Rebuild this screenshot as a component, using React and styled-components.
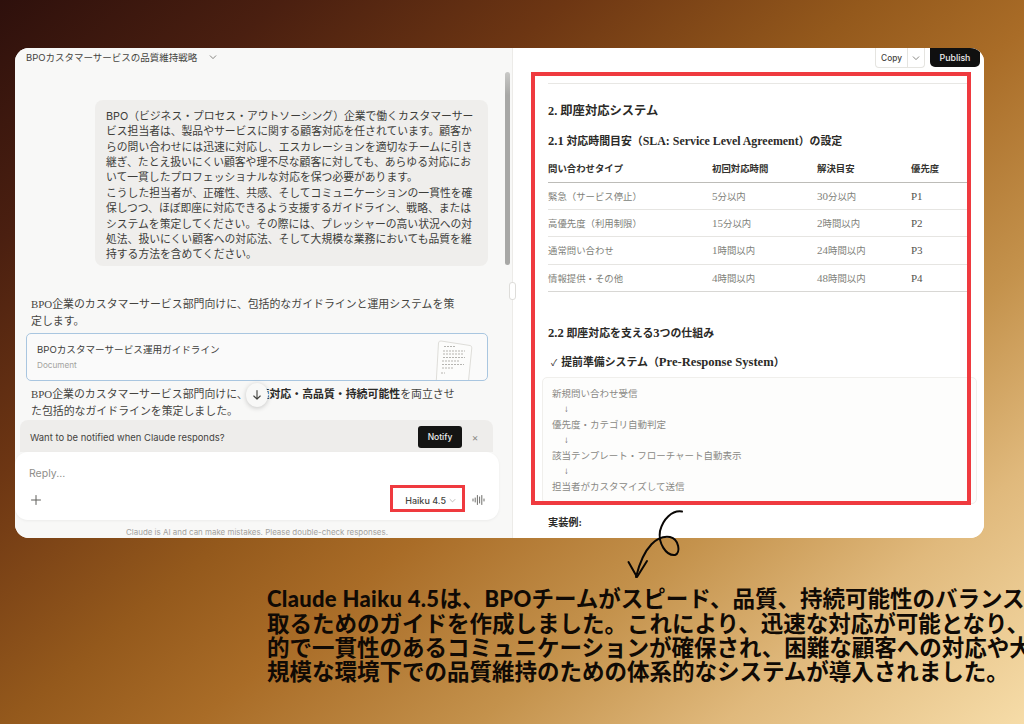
import React from "react";
import styled, { createGlobalStyle } from "styled-components";

const SANS = `"Inter", "Noto Sans CJK JP", sans-serif`;
const SERIF = `"Liberation Serif", "Noto Sans CJK JP", serif`;

const Global = createGlobalStyle`
  html, body { margin: 0; padding: 0; }
  body { width: 1024px; height: 724px; overflow: hidden; font-family: ${SANS}; }
`;

const Stage = styled.div`
  width: 1024px; height: 724px; box-sizing: border-box; overflow: hidden; position: relative;
  padding: 48px 0 0 15px;
  background: linear-gradient(140deg, #2e100c 0%, #4a1f10 15%, #6d3613 30%, #94591c 46%, #a96c27 56%, #c4924c 71%, #e0b97c 84%, #f6dca8 100%);
`;
const Win = styled.div`
  width: 969px; height: 490px; display: flex; position: relative; overflow: hidden;
  border-radius: 14px; background: #fff;
`;
const Left = styled.div`
  width: 497px; flex: none; display: flex; flex-direction: column; background: #f8f8f7; position: relative;
`;
const Title = styled.div`
  display: flex; align-items: center; gap: 12px; height: 18px; padding-left: 11px;
  font-size: 9.5px; color: #45443f;
`;
const Scrollbar = styled.div`
  position: absolute; right: 2px; top: 24px; width: 5px; height: 193px; border-radius: 3px;
  background: linear-gradient(#c9c9c7, #a8a8a6 12%, #a8a8a6);
`;
const Bubble = styled.div`
  margin: 34px 24px 0 80px; height: 168px; box-sizing: border-box; padding: 9px 11px 0;
  background: #efeeec; border-radius: 8px;
  font-size: 10.8px; line-height: 15.4px; color: #3d3d3a;
`;
const Para = styled.p`
  margin: ${p => p.$top}px 51px 0 16px; font-family: ${SERIF};
  font-size: 10.9px; line-height: 17px; color: #45443f;
  strong { font-family: ${SANS}; font-weight: 700; color: #2b2a27; }
`;
const DocCard = styled.div`
  margin: 3px 24px 0 11px; height: 48px; box-sizing: border-box; border: 1px solid #a9c6e0; border-radius: 5px;
  padding: 9px 10px; position: relative; overflow: hidden; background: #fafafa;
`;
const DocName = styled.div` font-size: 9.6px; line-height: 14px; color: #3d3d3a; `;
const DocKind = styled.div` font-size: 8.2px; line-height: 12px; margin-top: 2px; color: #a3a29e; `;
const Thumb = styled.svg` position: absolute; right: 14px; top: 6px; `;
const ScrollDown = styled.div`
  position: absolute; left: 231px; top: 335px; width: 22px; height: 24px; border-radius: 50%;
  background: #f8f8f7; box-shadow: 0 1px 5px rgba(0,0,0,.2);
  display: flex; align-items: center; justify-content: center;
`;
const Composer = styled.div`
  margin-top: auto; display: flex; flex-direction: column; position: relative;
`;
const NotifyBar = styled.div`
  margin: 0 19px 0 5px; height: 32px; background: #eeedeb; border-radius: 8px 8px 0 0;
  display: flex; align-items: center; box-sizing: border-box; padding: 2px 14px 0 10px;
  font-size: 9.45px; color: #45443f;
`;
const NotifyBtn = styled.div`
  margin-left: auto; width: 44px; height: 22px; border-radius: 3px; background: #141413; color: #eee;
  font-size: 8.5px; font-weight: 500; display: flex; align-items: center; justify-content: center;
`;
const Close = styled.span` margin-left: 9px; font-size: 10px; color: #8a8985; width: 8px; text-align: center; `;
const Input = styled.div`
  height: 68px; width: 484px; box-sizing: border-box; background: #fff; border-radius: 13px;
  padding: 15px 13px 0 14px; box-shadow: 0 1px 3px rgba(0,0,0,.05);
`;
const Placeholder = styled.div` font-size: 10.5px; line-height: 14px; color: #8f8e8a; `;
const InputRow = styled.div` display: flex; align-items: center; margin-top: 9px; height: 20px; `;
const Model = styled.div`
  margin-left: auto; display: flex; align-items: center; gap: 3px; color: #45443f; font-size: 9px; font-weight: 500;
`;
const Wave = styled.svg` margin-left: 16px; `;
const Footnote = styled.div`
  height: 18px; line-height: 25px; width: 484px; text-align: center; font-size: 7.95px; color: #a3a29e;
`;
const Right = styled.div`
  flex: 1; position: relative; border-left: 1px solid #ecebe8; background: #fff; padding-left: 35px;
`;
const Handle = styled.div`
  position: absolute; left: -4px; top: 234px; width: 7px; height: 18px; border-radius: 3px;
  background: #fff; border: 1px solid #dedddA; box-sizing: border-box;
`;
const Actions = styled.div`
  position: absolute; top: 0; right: 4px; display: flex; gap: 5px; z-index: 2;
`;
const CopyGroup = styled.div`
  display: flex; height: 19px; border: 1px solid #e5e4e0; border-top: none; border-radius: 0 0 4px 4px; background: #fff;
  font-size: 8.3px; font-weight: 500; color: #45443f; align-items: center;
`;
const CopyLabel = styled.span` width: 31px; text-align: center; `;
const CopyChevron = styled.span`
  width: 16px; height: 100%; border-left: 1px solid #e5e4e0; display: flex; align-items: center; justify-content: center;
`;
const Publish = styled.div`
  width: 50px; height: 19px; background: #101010; color: #eee; border-radius: 0 0 5px 5px;
  font-size: 8.8px; font-weight: 500; display: flex; align-items: center; justify-content: center;
`;
const Doc = styled.div` padding-top: 35px; width: 421px; `;
const Rule = styled.hr` margin: 0; border: none; border-top: 1px solid #e8e7e4; `;
const H2 = styled.h2`
  margin: 19px 0 0; font: 700 12.3px/16px ${SERIF}; color: #2b2a27;
`;
const H3 = styled.h3`
  margin: ${p => p.$top}px 0 0; font: 700 10.9px/16px ${SERIF}; color: #2b2a27;
`;
const Latin = styled.span` font-size: ${p => p.$s || 12.6}px; line-height: 1; `;
const Table = styled.table`
  width: 100%; margin-top: 5.5px; border-collapse: collapse; table-layout: fixed;
  font-family: ${SERIF}; font-size: 9.4px;
  th { text-align: left; font-weight: 700; color: #33322e; height: 27px; padding: 0; border-bottom: 1px solid #bdbcb8; }
  td { color: #807f7a; height: 26.4px; padding: 0; border-bottom: 1px solid #e6e5e2; }
  td:last-child { color: #54534e; font-size: 11px; }
  tr:last-child td { border-bottom-color: #d8d7d4; }
`;
const Num = styled.span` font-size: 11px; line-height: 1; `;
const Col = styled.col` width: ${p => p.$w}px; `;
const Check = styled.span` font-weight: 400; font-size: 9px; margin: 0 4px 0 3px; `;
const Code = styled.pre`
  margin: 6px -8px 0 -6px; height: 127px; box-sizing: border-box; padding: 9px 9px;
  border: 1px solid #f0efec; border-radius: 5px; background: #fdfdfc; overflow: hidden;
  font: 400 9.5px/15.5px ${SERIF}; color: #8a8985;
`;
const Down = styled.span` color: #5f5e5a; font-weight: 700; `;
const Impl = styled.div` margin-top: 12px; font: 700 10.2px/14px ${SERIF}; color: #2b2a27; `;
const RedBox = styled.div`
  position: absolute; border: ${p => p.$b}px solid #ef3a3f; box-sizing: border-box;
  left: ${p => p.$x}px; top: ${p => p.$y}px; width: ${p => p.$w}px; height: ${p => p.$h}px; pointer-events: none;
`;
const Arrow = styled.svg` position: absolute; left: 620px; top: 505px; z-index: 3; `;
const Caption = styled.div`
  margin: 47px 0 0 252px; white-space: nowrap; font-family: "Noto Sans CJK JP", sans-serif;
  font-weight: 700; font-size: 22.5px; line-height: 24px; color: #100a05;
`;
const CaptionLatin = styled.span`
  font-family: "Lato", sans-serif; font-weight: 900; font-size: 22px; letter-spacing: .3px; line-height: 1;
`;

const Chevron = ({ s = 8, c = "#6b6a65" }) => (
  <svg width={s} height={s} viewBox="0 0 10 10" fill="none" stroke={c} strokeWidth="1" strokeLinecap="round" strokeLinejoin="round">
    <path d="M1.5 3.5 5 7l3.5-3.5" />
  </svg>
);

const rows = [
  ["緊急（サービス停止）", [5, "分以内"], [30, "分以内"], "P1"],
  ["高優先度（利用制限）", [15, "分以内"], [2, "時間以内"], "P2"],
  ["通常問い合わせ", [1, "時間以内"], [24, "時間以内"], "P3"],
  ["情報提供・その他", [4, "時間以内"], [48, "時間以内"], "P4"],
];

const Time = ({ v }) => <td><Num>{v[0]}</Num>{v[1]}</td>;

export default function App() {
  return (
    <Stage>
      <Global />
      <Win>
        <Left>
          <Title>BPOカスタマーサービスの品質維持戦略 <Chevron /></Title>
          <Scrollbar />
          <Bubble>
            BPO（ビジネス・プロセス・アウトソーシング）企業で働くカスタマーサービス担当者は、製品やサービスに関する顧客対応を任されています。顧客からの問い合わせには迅速に対応し、エスカレーションを適切なチームに引き継ぎ、たとえ扱いにくい顧客や理不尽な顧客に対しても、あらゆる対応において一貫したプロフェッショナルな対応を保つ必要があります。<br />
            こうした担当者が、正確性、共感、そしてコミュニケーションの一貫性を確保しつつ、ほぼ即座に対応できるよう支援するガイドライン、戦略、またはシステムを策定してください。その際には、プレッシャーの高い状況への対処法、扱いにくい顧客への対応法、そして大規模な業務においても品質を維持する方法を含めてください。
          </Bubble>
          <Para $top={30}>BPO企業のカスタマーサービス部門向けに、包括的なガイドラインと運用システムを策定します。</Para>
          <DocCard>
            <DocName>BPOカスタマーサービス運用ガイドライン</DocName>
            <DocKind>Document</DocKind>
            <Thumb width="38" height="42" viewBox="0 0 38 42">
              <path d="M6 1 35 5.5q2 .4 1.8 2.4L33 46H1L3.5 3Q3.8.7 6 1Z" fill="#fcfcfb" stroke="#dedDd9" />
              <path d="M9 6.5h12M8 11h22M8 14h20M8 17.5h22M7 21h18M7 24.5h22M7 28h12M6 33h4" stroke="#b5b4b0" strokeWidth="1.2" strokeDasharray="2 1" />
            </Thumb>
          </DocCard>
          <Para $top={5}>BPO企業のカスタマーサービス部門向けに、<strong>迅速対応・高品質・持続可能性</strong>を両立させた包括的なガイドラインを策定しました。</Para>
          <ScrollDown>
            <svg width="12" height="12" viewBox="0 0 12 12" fill="none" stroke="#3d3d3a" strokeWidth="1.1" strokeLinecap="round" strokeLinejoin="round"><path d="M6 1.5v8.5M2.8 7 6 10.2 9.2 7" /></svg>
          </ScrollDown>
          <Composer>
            <NotifyBar>
              Want to be notified when Claude responds?
              <NotifyBtn>Notify</NotifyBtn>
              <Close>×</Close>
            </NotifyBar>
            <Input>
              <Placeholder>Reply...</Placeholder>
              <InputRow>
                <svg width="14" height="14" viewBox="0 0 14 14" fill="none" stroke="#5f5e5a" strokeWidth="1" strokeLinecap="round"><path d="M7 2.5v9M2.5 7h9" /></svg>
                <Model>Haiku 4.5 <Chevron s={7} c="#a3a29e" /></Model>
                <Wave width="14" height="14" viewBox="0 0 14 14" fill="none" stroke="#5f5e5a" strokeWidth=".9" strokeLinecap="round">
                  <path d="M1 6v2M3.2 5v4M5.4 2.5v9M7.6 4v6M9.8 2.5v9M12 6v2" />
                </Wave>
              </InputRow>
            </Input>
            <Footnote>Claude is AI and can make mistakes. Please double-check responses.</Footnote>
          </Composer>
        </Left>
        <Right>
          <Handle />
          <Actions>
            <CopyGroup><CopyLabel>Copy</CopyLabel><CopyChevron><Chevron s={8} /></CopyChevron></CopyGroup>
            <Publish>Publish</Publish>
          </Actions>
          <Doc>
            <Rule />
            <H2>2. 即座対応システム</H2>
            <H3 $top={14}><Latin>2.1</Latin> 対応時間目安（<Latin $s={11.9}>SLA: Service Level Agreement</Latin>）の設定</H3>
            <Table>
              <colgroup><Col $w={164} /><Col $w={105} /><Col $w={94} /><Col /></colgroup>
              <thead><tr><th>問い合わせタイプ</th><th>初回対応時間</th><th>解決目安</th><th>優先度</th></tr></thead>
              <tbody>
                {rows.map(r => <tr key={r[0]}><td>{r[0]}</td><Time v={r[1]} /><Time v={r[2]} /><td>{r[3]}</td></tr>)}
              </tbody>
            </Table>
            <H3 $top={32.5}><Latin>2.2</Latin> 即座対応を支える<Latin>3</Latin>つの仕組み</H3>
            <H3 $top={13}><Check>✓</Check>提前準備システム（<Latin>Pre-Response System</Latin>）</H3>
            <Code>新規問い合わせ受信{"\n     "}<Down>↓</Down>{"\n"}優先度・カテゴリ自動判定{"\n     "}<Down>↓</Down>{"\n"}該当テンプレート・フローチャート自動表示{"\n     "}<Down>↓</Down>{"\n"}担当者がカスタマイズして送信</Code>
            <Impl>実装例:</Impl>
          </Doc>
        </Right>
      </Win>
      <RedBox $b={4} $x={531} $y={72} $w={440} $h={433} />
      <RedBox $b={3} $x={390} $y={485} $w={75} $h={27} />
      <Arrow width="80" height="80" viewBox="0 0 80 80" fill="none" stroke="#0a0705" strokeWidth="2" strokeLinecap="round" strokeLinejoin="round">
        <path d="M62 6.5C52 5 43 14 40 26 38 38 46 51 55 50 61 48 59 34 50 32 38 30 24 40 16 72" />
        <path d="M8.5 57 17 72 27 56" />
      </Arrow>
      <Caption>
        <CaptionLatin>Claude Haiku 4.5</CaptionLatin>は、<CaptionLatin>BPO</CaptionLatin>チームがスピード、品質、持続可能性のバランスを<br />
        取るためのガイドを作成しました。これにより、迅速な対応が可能となり、効率<br />
        的で一貫性のあるコミュニケーションが確保され、困難な顧客への対応や大<br />
        規模な環境下での品質維持のための体系的なシステムが導入されました。
      </Caption>
    </Stage>
  );
}
